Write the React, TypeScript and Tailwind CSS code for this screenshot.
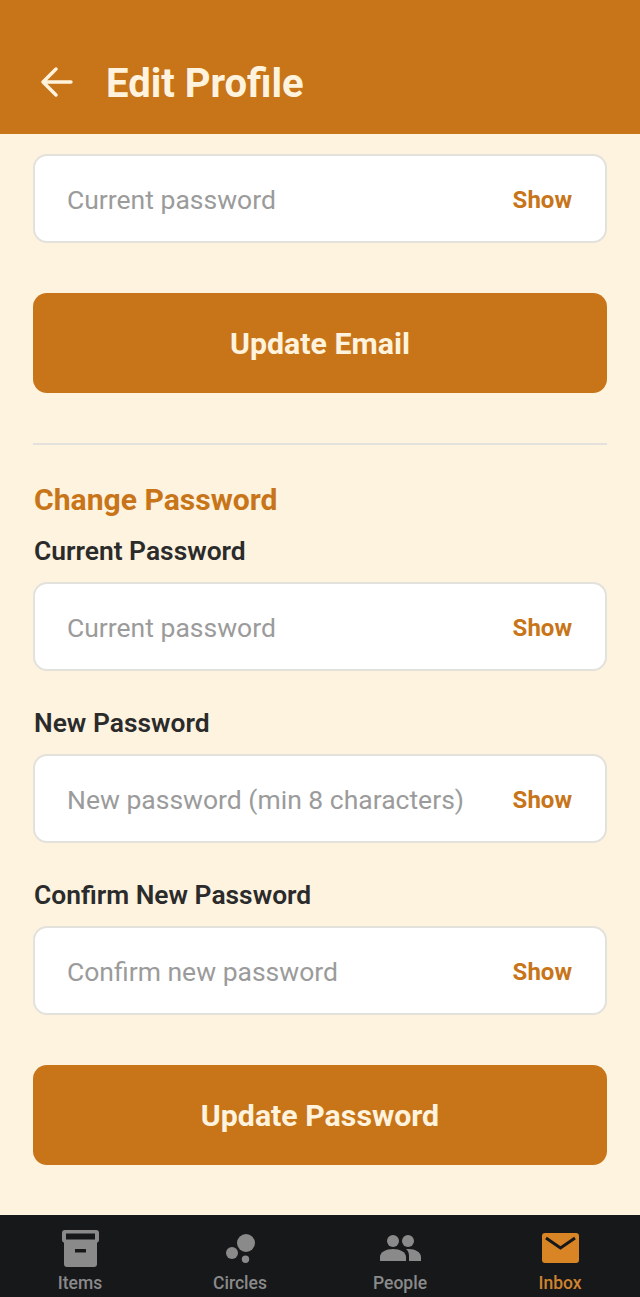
const font = { fontFamily: "Roboto, sans-serif" };

function PasswordField({ placeholder }: { placeholder: string }) {
  return (
    <div className="flex h-[89px] items-center justify-between rounded-[14px] border-2 border-[#e3e1dc] bg-white pl-[32px] pr-[33px]">
      <span className="pt-[3px] text-[26.500px] leading-none text-[#9b9b9b]">{placeholder}</span>
      <span className="pt-[2px] text-[24px] leading-none font-bold text-[#c8751a]">Show</span>
    </div>
  );
}

function Label({ children }: { children: string }) {
  return <div className="mb-[16px] ml-px text-[26.400px] leading-[30px] font-semibold text-[#2b2b2b]">{children}</div>;
}

function PrimaryButton({ children }: { children: string }) {
  return (
    <div className="flex h-[100px] items-center justify-center rounded-[14px] bg-[#c8751a] pt-[2px] text-[30.300px] font-bold text-[#fff3de]">
      {children}
    </div>
  );
}

function NavItem({ label, active, children }: { label: string; active?: boolean; children: React.ReactNode }) {
  return (
    <div className="flex flex-1 flex-col items-center pt-[12px]">
      <div className="flex h-[42px] w-[44px] items-center justify-center">{children}</div>
      <div className={`mt-[3px] text-[17.500px] leading-[22px] font-medium ${active ? "text-[#cf8330]" : "text-[#8a8a8a]"}`}>{label}</div>
    </div>
  );
}

export default function App() {
  return (
    <div style={font} className="flex h-[1297px] w-[640px] flex-col overflow-hidden bg-[#fef3df]">
      {/* header */}
      <div className="flex h-[134px] items-center bg-[#c8751a] pt-[33px] pl-[40px]">
        <svg className="-mt-[3px]" width="33" height="30" viewBox="0 0 33 30" fill="none" stroke="#fff3de" strokeWidth="3.4" strokeLinecap="round" strokeLinejoin="round">
          <path d="M3 15h28M16 2 3 15l13 13" />
        </svg>
        <div className="ml-[33px] pt-[1px] text-[40px] leading-none font-bold text-[#fff3de]">Edit Profile</div>
      </div>

      {/* form */}
      <div className="flex-1 px-[33px] pt-[20px]">
        <PasswordField placeholder="Current password" />
        <div className="mt-[50px]">
          <PrimaryButton>Update Email</PrimaryButton>
        </div>
        <div className="mt-[50px] h-[2px] bg-[#e3e1dc]" />
        <div className="mt-[38px] mb-[19px] ml-px text-[30.100px] leading-[34px] font-bold text-[#c8751a]">Change Password</div>
        <Label>Current Password</Label>
        <PasswordField placeholder="Current password" />
        <div className="mt-[37px]">
          <Label>New Password</Label>
          <PasswordField placeholder="New password (min 8 characters)" />
        </div>
        <div className="mt-[37px]">
          <Label>Confirm New Password</Label>
          <PasswordField placeholder="Confirm new password" />
        </div>
        <div className="mt-[50px]">
          <PrimaryButton>Update Password</PrimaryButton>
        </div>
      </div>

      {/* bottom nav */}
      <div className="flex h-[82px] bg-[#17181a]">
        <NavItem label="Items">
          <svg width="37" height="37" viewBox="0 0 37 37">
            <path fill="#8a8a8a" d="M3 0h31a3 3 0 0 1 3 3v7a3 3 0 0 1-2 2.800V34a3 3 0 0 1-3 3H5a3 3 0 0 1-3-3V12.800A3 3 0 0 1 0 10V3a3 3 0 0 1 3-3Z" />
            <rect x="4" y="3.500" width="29" height="6" fill="#17181a" />
            <rect x="13" y="19" width="11" height="3.500" fill="#17181a" />
          </svg>
        </NavItem>
        <NavItem label="Circles">
          <svg width="29" height="29" viewBox="0 0 29 29" fill="#8a8a8a">
            <circle cx="20" cy="9" r="9" />
            <circle cx="6" cy="19" r="6" />
            <circle cx="19.500" cy="25.300" r="3.700" />
          </svg>
        </NavItem>
        <NavItem label="People">
          <svg width="41" height="26" viewBox="0 0 41 26" fill="#8a8a8a">
            <circle cx="13" cy="6" r="6" />
            <circle cx="28" cy="6" r="6" />
            <path d="M0 26v-4c0-5 6-8 13-8s13 3 13 8v4Z" />
            <path d="M26 14c1 0 2-.1 3-.1 6 0 12 3 12 8v4.100H29v-5c0-3-1-5.500-3-7Z" />
          </svg>
        </NavItem>
        <NavItem label="Inbox" active>
          <svg width="37" height="30" viewBox="0 0 37 30">
            <rect width="37" height="30" rx="3" fill="#d98425" />
            <path d="M4 5l14.500 10L33 5" fill="none" stroke="#17181a" strokeWidth="3" />
          </svg>
        </NavItem>
      </div>
    </div>
  );
}
